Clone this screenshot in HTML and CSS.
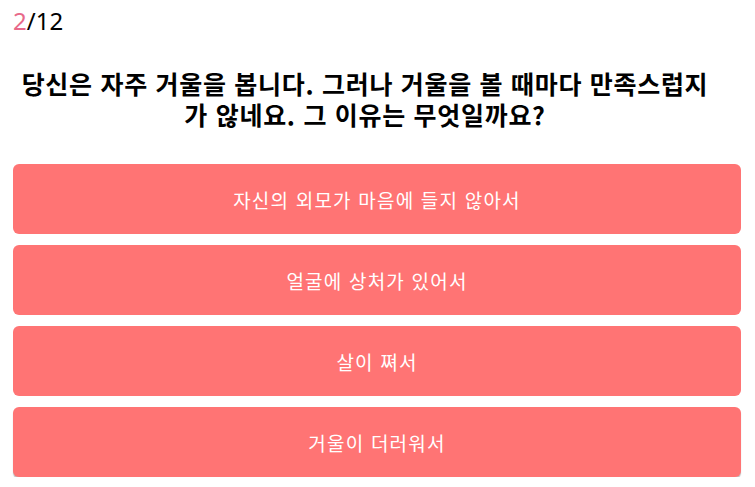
FILE: index.html
```html
<!DOCTYPE html>
<html lang="ko">
<head>
<meta charset="utf-8">
<link rel="stylesheet" href="styles.css">
</head>
<body>
<main class="quiz">
  <div class="progress"><span class="current">2</span>/12</div>
  <h1 class="question">당신은 자주 거울을 봅니다. 그러나 거울을 볼 때마다 만족스럽지가 않네요. 그 이유는 무엇일까요?</h1>
  <div class="answers">
    <button class="answer">자신의 외모가 마음에 들지 않아서</button>
    <button class="answer">얼굴에 상처가 있어서</button>
    <button class="answer">살이 쪄서</button>
    <button class="answer answer-active">거울이 더러워서</button>
  </div>
</main>
</body>
</html>
```
FILE: styles.css
```css
html, body {
  margin: 0;
  padding: 0;
  background: #ffffff;
}
body {
  font-family: "Noto Sans", "Noto Sans CJK KR", sans-serif;
  color: #000;
}
.quiz {
  padding: 4px 14px 0 13px;
}
.progress {
  font-size: 24px;
  line-height: 34px;
  height: 34px;
}
.current {
  color: #e8698a;
}
.question {
  margin: 30px 31px 0 7px;
  font-family: "Noto Sans CJK KR", sans-serif;
  font-size: 25px;
  font-weight: 700;
  letter-spacing: 0.7px;
  line-height: 31px;
  text-align: center;
}
.answers {
  margin-top: 34px;
  display: flex;
  flex-direction: column;
  gap: 11px;
}
.answer {
  display: block;
  width: 100%;
  height: 70px;
  border: none;
  border-radius: 6px;
  background: #ff7474;
  color: #ffffff;
  font-family: "Noto Sans CJK KR", sans-serif;
  font-size: 19px;
  letter-spacing: 1.2px;
  padding: 0;
}
.answer-active {
  box-shadow: 0 2px 1px rgba(0, 0, 0, 0.25);
}
```
